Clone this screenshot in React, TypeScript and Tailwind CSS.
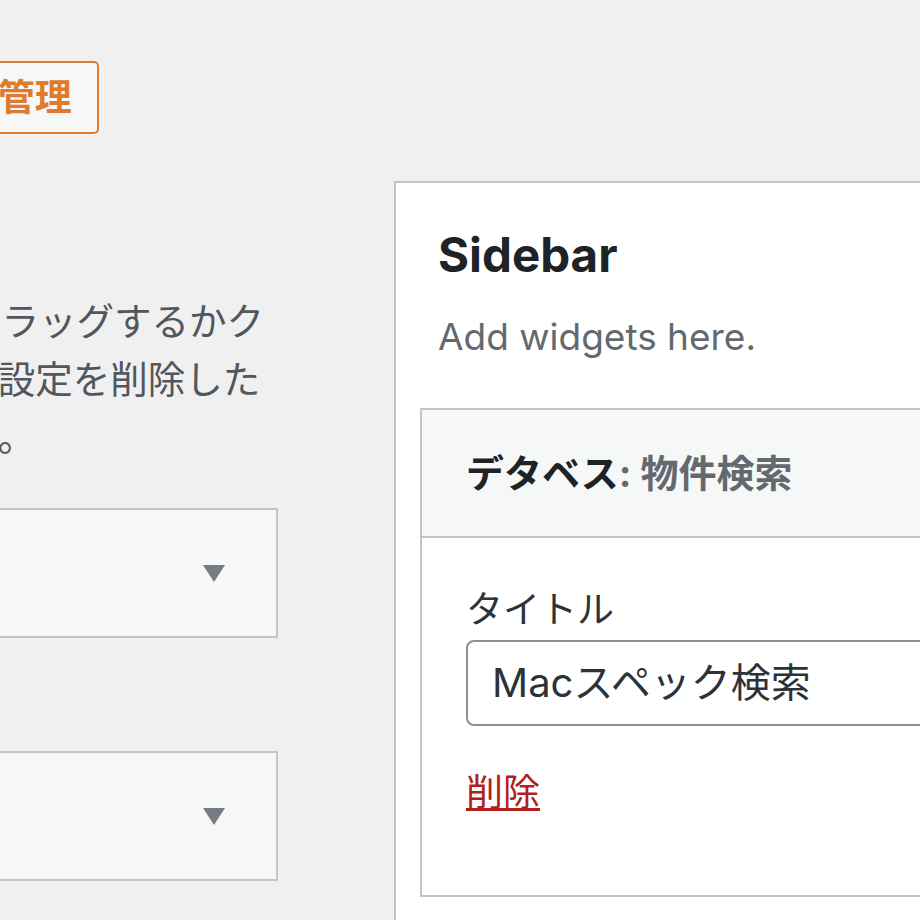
import React from "react"

const font = { fontFamily: '"Inter", "Noto Sans CJK JP", sans-serif' }

function Caret() {
  return (
    <svg width="22" height="17" viewBox="0 0 22 17">
      <polygon points="0,0 22,0 11,17" fill="#787c82" />
    </svg>
  )
}

function SidebarSelect({ label }: { label: string }) {
  return (
    <div className="ml-[-300px] flex h-[130px] w-[578px] items-center justify-between border-2 border-[#c3c4c7] bg-[#f6f7f7] pl-[40px] pr-[51px]">
      <span className="text-[37px] font-semibold text-[#1d2327]">{label}</span>
      <Caret />
    </div>
  )
}

export default function App() {
  return (
    <div className="flex h-[920px] w-[920px] items-start gap-[116px] overflow-hidden bg-[#f0f0f1]" style={font}>
      <div className="flex w-[278px] shrink-0 flex-col pt-[61px]">
        <div>
          <button className="ml-[-359px] flex h-[73px] items-center whitespace-nowrap rounded-[5px] border-2 border-[#e07a2e] bg-[#f6f7f7] pl-[24px] pr-[25px] text-[37px] font-bold text-[#e07a2e]">
            ライブプレビューで管理
          </button>
        </div>

        <div className="ml-[-261px] mt-[159px] whitespace-nowrap text-[37.5px] leading-[58px] text-[#50575e]">
          <div>サイドバーにドラッグするかク</div>
          <div>リックします。設定を削除した</div>
          <div>場合は元に戻す。</div>
        </div>

        <div className="mt-[41px]">
          <SidebarSelect label="" />
        </div>
        <div className="mt-[113px]">
          <SidebarSelect label="" />
        </div>
      </div>

      <div className="mt-[181px] w-[640px] shrink-0 border-2 border-[#c3c4c7] bg-white pb-[40px] pl-[24px]">
        <div className="pl-[18px] pt-[42px]">
          <h2 className="text-[47.5px] font-bold leading-[59px] text-[#1d2327]">Sidebar</h2>
          <p className="mt-[24px] text-[37px] leading-[58px] text-[#646970]">Add widgets here.</p>
        </div>

        <div className="mt-[42px] border-2 border-r-0 border-[#c3c4c7]">
          <div className="flex h-[128px] items-center border-b-2 border-[#c3c4c7] bg-[#f6f7f7] px-[44px]">
            <h3 className="text-[38px] font-bold text-[#1d2327]">
              デタベス<span className="text-[#646970]">: 物件検索</span>
            </h3>
          </div>
          <div className="px-[44px] pb-[76px] pt-[46px]">
            <label className="block text-[37px] leading-[52px] text-[#2c3338]">タイトル</label>
            <div className="mt-[4px] flex h-[86px] items-center rounded-[8px] border-2 border-[#8c8f94] bg-white pl-[24px]">
              <span className="text-[40px] text-[#2c3338]">Macスペック検索</span>
            </div>
            <a href="#" className="mt-[41px] block w-fit text-[37px] leading-[52px] text-[#b01e1f] underline">
              削除
            </a>
          </div>
        </div>
      </div>
    </div>
  )
}
